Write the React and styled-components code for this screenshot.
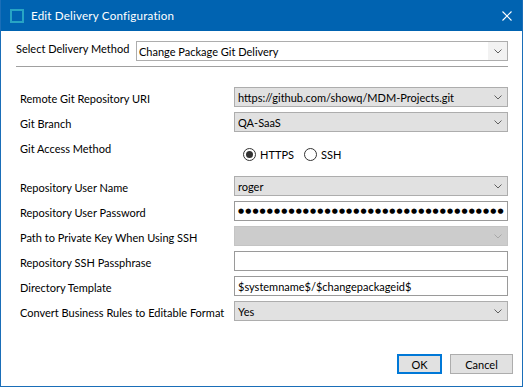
import styled, { createGlobalStyle } from "styled-components";

const GlobalStyle = createGlobalStyle`
  html, body {
    margin: 0;
    padding: 0;
    background: #ffffff;
  }
  body {
    font-family: Lato, "Noto Sans", sans-serif;
    font-size: 11px;
    color: #000;
  }
`;

const Window = styled.div`
  width: 523px;
  height: 387px;
  box-sizing: border-box;
  border: 1px solid #1a6eb8;
  border-top: none;
  display: flex;
  flex-direction: column;
  background: #fff;
`;

const TitleBar = styled.div`
  height: 31px;
  background: #0063b1;
  display: flex;
  align-items: center;
  padding: 0 10px 0 9px;
  color: #fff;
  flex-shrink: 0;
`;

const AppIcon = styled.span`
  width: 14px;
  height: 14px;
  box-sizing: border-box;
  border: 2px solid #27a4c4;
  margin-right: 7px;
`;

const TitleText = styled.span`
  flex: 1;
  font-size: 11.6px;
  letter-spacing: 0.2px;
`;

const Body = styled.div`
  padding: 10px 14px 0 15px;
`;

const MethodRow = styled.div`
  display: flex;
  align-items: flex-start;
  height: 20px;
`;

const MethodLabel = styled.div`
  width: 120px;
  line-height: 16px;
  white-space: nowrap;
`;

const SelectBox = styled.div`
  flex: 1;
  height: 20px;
  box-sizing: border-box;
  border: 1px solid #adadad;
  background: #fff;
  display: flex;
  align-items: center;
  padding-left: 2px;
`;

const SelectValue = styled.span`
  flex: 1;
`;

const DropButton = styled.span`
  width: 19px;
  align-self: stretch;
  background: #f2f2f2;
  display: flex;
  align-items: center;
  justify-content: center;
`;

const Divider = styled.div`
  height: 1px;
  background: #a0a0a0;
  margin-top: 5px;
`;

const Form = styled.div`
  display: grid;
  grid-template-columns: 214px 274px;
  row-gap: 5px;
  margin-top: 20px;
  padding-left: 4px;
`;

const Label = styled.div`
  line-height: 16px;
  padding-top: 4px;
  white-space: nowrap;
`;

const Combo = styled.div`
  height: 20px;
  box-sizing: border-box;
  border: 1px solid ${(p) => (p.$disabled ? "#c4c4c4" : "#adadad")};
  background: ${(p) => (p.$disabled ? "#cccccc" : "#e1e1e1")};
  display: flex;
  align-items: center;
  padding: 0 5px 0 3px;
  color: ${(p) => (p.$disabled ? "#838383" : "#000")};
`;

const ComboValue = styled.span`
  flex: 1;
  white-space: nowrap;
  overflow: hidden;
`;

const TextBox = styled.div`
  height: 20px;
  box-sizing: border-box;
  border: 1px solid #9a9a9a;
  background: #fff;
  display: flex;
  align-items: center;
  padding: 0 3px;
  white-space: nowrap;
  overflow: hidden;
`;

const Dots = styled.span`
  font-family: "DejaVu Sans", sans-serif;
  font-size: 7px;
  letter-spacing: 1.1px;
  line-height: 1;
`;

const RadioGroup = styled.div`
  height: 34px;
  display: flex;
  align-items: center;
  padding-left: 9px;
  gap: 10px;
`;

const RadioOption = styled.label`
  display: flex;
  align-items: center;
  gap: 4px;
`;

const RadioCircle = styled.span`
  width: 13px;
  height: 13px;
  box-sizing: border-box;
  border-radius: 50%;
  border: 1px solid #333;
  background: #fff;
  display: flex;
  align-items: center;
  justify-content: center;

  &::after {
    content: "";
    width: 7px;
    height: 7px;
    border-radius: 50%;
    background: ${(p) => (p.$checked ? "#333" : "transparent")};
  }
`;

const Footer = styled.div`
  margin-top: auto;
  display: flex;
  justify-content: flex-end;
  gap: 8px;
  padding: 0 9px 12px 0;
`;

const Button = styled.button`
  height: 20px;
  width: ${(p) => p.$width}px;
  box-sizing: border-box;
  background: #e1e1e1;
  border: ${(p) => (p.$primary ? "2px solid #0078d7" : "1px solid #adadad")};
  font-family: inherit;
  font-size: 11px;
  color: #000;
  padding: 0;
`;

function Chevron({ light }) {
  return (
    <svg width="8" height="5" viewBox="0 0 8 5">
      <polyline
        points="0.5,0.5 4,4 7.5,0.5"
        fill="none"
        stroke={light ? "#a8a8a8" : "#606060"}
        strokeWidth="1"
      />
    </svg>
  );
}

function CloseIcon() {
  return (
    <svg width="10" height="10" viewBox="0 0 10 10">
      <path d="M0.5 0.5 L9.5 9.5 M9.5 0.5 L0.5 9.5" stroke="#fff" strokeWidth="1.1" />
    </svg>
  );
}

function ComboField({ value, disabled }) {
  return (
    <Combo $disabled={disabled}>
      <ComboValue>{value}</ComboValue>
      <Chevron light={disabled} />
    </Combo>
  );
}

export default function App() {
  return (
    <>
      <GlobalStyle />
      <Window>
        <TitleBar>
          <AppIcon />
          <TitleText>Edit Delivery Configuration</TitleText>
          <CloseIcon />
        </TitleBar>
        <Body>
          <MethodRow>
            <MethodLabel>Select Delivery Method</MethodLabel>
            <SelectBox>
              <SelectValue>Change Package Git Delivery</SelectValue>
              <DropButton>
                <Chevron />
              </DropButton>
            </SelectBox>
          </MethodRow>
          <Divider />
          <Form>
            <Label>Remote Git Repository URI</Label>
            <ComboField value="https://github.com/showq/MDM-Projects.git" />

            <Label>Git Branch</Label>
            <ComboField value="QA-SaaS" />

            <Label>Git Access Method</Label>
            <RadioGroup>
              <RadioOption>
                <RadioCircle $checked />
                HTTPS
              </RadioOption>
              <RadioOption>
                <RadioCircle />
                SSH
              </RadioOption>
            </RadioGroup>

            <Label>Repository User Name</Label>
            <ComboField value="roger" />

            <Label>Repository User Password</Label>
            <TextBox>
              <Dots>{"●".repeat(37)}</Dots>
            </TextBox>

            <Label>Path to Private Key When Using SSH</Label>
            <ComboField value="" disabled />

            <Label>Repository SSH Passphrase</Label>
            <TextBox />

            <Label>Directory Template</Label>
            <TextBox>$systemname$/$changepackageid$</TextBox>

            <Label>Convert Business Rules to Editable Format</Label>
            <ComboField value="Yes" />
          </Form>
        </Body>
        <Footer>
          <Button $primary $width={45}>OK</Button>
          <Button $width={63}>Cancel</Button>
        </Footer>
      </Window>
    </>
  );
}
